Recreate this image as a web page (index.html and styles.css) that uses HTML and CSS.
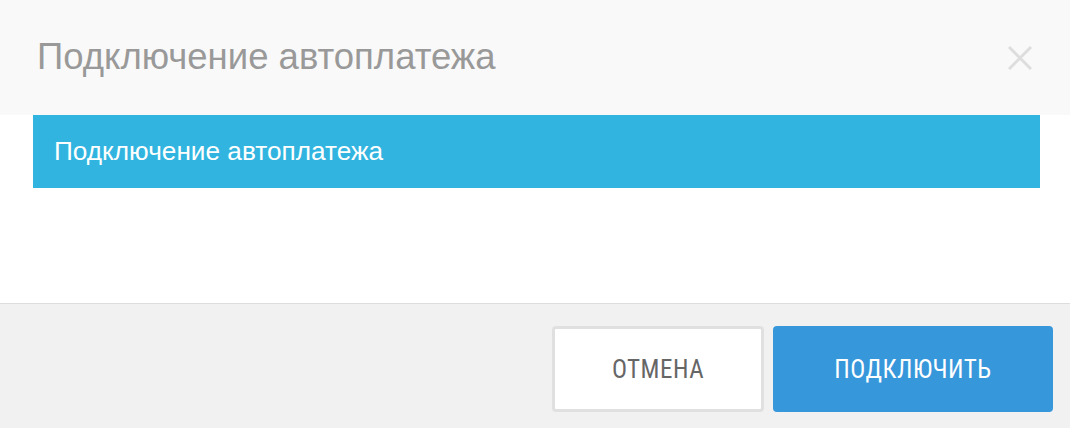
FILE: index.html
```html
<!DOCTYPE html>
<html lang="ru">
<head>
    <meta charset="UTF-8">
    <meta name="viewport" content="width=device-width, initial-scale=1.0">
    <title>Подключение автоплатежа</title>
    <link rel="stylesheet" href="styles.css">
</head>
<body>
    <div class="modal">
        <div class="modal-header">
            <h1 class="modal-title">Подключение автоплатежа</h1>
            <button class="modal-close" type="button" aria-label="Закрыть">
                <svg width="24" height="24" viewBox="0 0 24 24">
                    <path d="M1 1 L23 23 M23 1 L1 23" stroke="#dddddd" stroke-width="3" fill="none"/>
                </svg>
            </button>
        </div>
        <div class="modal-body">
            <div class="info-bar">Подключение автоплатежа</div>
        </div>
        <div class="modal-footer">
            <button class="btn btn-cancel" type="button">Отмена</button>
            <button class="btn btn-primary" type="button">Подключить</button>
        </div>
    </div>
</body>
</html>
```

FILE: styles.css
```css
body {
    margin: 0;
    padding: 0;
    font-family: "Liberation Sans", Arial, sans-serif;
    background-color: #ffffff;
}
.modal {
    width: 1070px;
    height: 428px;
    overflow: hidden;
}
.modal-header {
    background-color: #f9f9f9;
    height: 115px;
    display: flex;
    align-items: center;
    justify-content: space-between;
    padding: 0 37px 0 37px;
    box-sizing: border-box;
}
.modal-title {
    margin: 0;
    font-size: 36.5px;
    font-weight: normal;
    color: #999999;
    line-height: 1;
}
.modal-close {
    background: none;
    border: none;
    padding: 0;
    width: 24px;
    height: 24px;
    margin-right: 1px;
    cursor: pointer;
}
.modal-close svg {
    display: block;
}
.modal-body {
    height: 188px;
    padding: 0 30px 0 33px;
}
.info-bar {
    background-color: #31b5e0;
    color: #ffffff;
    height: 73px;
    display: flex;
    align-items: center;
    padding-left: 21px;
    font-size: 26.2px;
}
.modal-footer {
    background-color: #f1f1f1;
    border-top: 1px solid #dddddd;
    height: 125px;
    display: flex;
    justify-content: flex-end;
    align-items: flex-start;
    gap: 9px;
    padding: 22px 17px 0 0;
    box-sizing: border-box;
}
.btn {
    height: 86px;
    border-radius: 4px;
    font-family: Roboto, "Noto Sans", sans-serif;
    font-stretch: condensed;
    font-size: 25px;
    text-transform: uppercase;
    cursor: pointer;
    letter-spacing: 0.5px;
}
.btn-cancel {
    width: 212px;
    background-color: #ffffff;
    border: 3px solid #e0e0e0;
    color: #666666;
}
.btn-primary {
    width: 280px;
    background-color: #3797db;
    border: none;
    color: #ffffff;
}
```
